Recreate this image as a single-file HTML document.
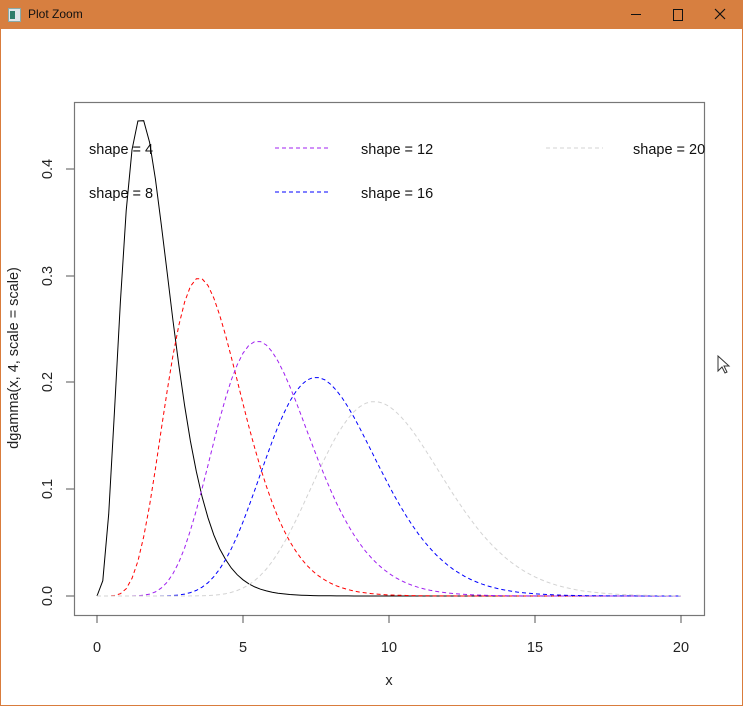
<!DOCTYPE html>
<html><head><meta charset="utf-8"><style>
html,body{margin:0;padding:0;width:743px;height:707px;overflow:hidden;background:#fff;font-family:"Liberation Sans",sans-serif}
.win{position:absolute;left:0;top:0;width:741px;height:705px;border:1px solid #d97c3c;border-top:none}
.tb{position:absolute;left:0;top:0;width:743px;height:29px;background:#d77f40}
.tb span{position:absolute;left:28px;top:7px;font-size:12px;color:#111}
svg text{font-family:"Liberation Sans",sans-serif}
</style></head><body>
<div class="win"></div>
<div class="tb">
<div style="position:absolute;left:8px;top:8px;width:11px;height:12px;background:#dfe6ea;border:1px solid #8aa"><div style="position:absolute;left:1px;top:2px;width:5px;height:8px;background:#2e7d6a"></div></div>
<span>Plot Zoom</span>
<div style="position:absolute;left:631px;top:14px;width:10px;height:1px;background:#111"></div>
<div style="position:absolute;left:673px;top:9px;width:8px;height:10px;border:1px solid #111"></div>
<svg style="position:absolute;left:714px;top:8px" width="12" height="12"><path d="M1 1L11 11M11 1L1 11" stroke="#111" stroke-width="1.2"/></svg>
</div>
<svg id="p" style="position:absolute;left:0;top:0" width="743" height="707">
<rect x="74.5" y="102.5" width="630" height="513" fill="none" stroke="#777" stroke-width="1.2"/>
<g stroke="#555" stroke-width="1">
<path d="M97 615v8M243 615v8M389 615v8M535 615v8M681 615v8"/>
<path d="M74 596h-8M74 489h-8M74 382h-8M74 276h-8M74 169h-8"/>
</g>
<g font-size="14.5" fill="#222" text-anchor="middle">
<text x="97" y="652">0</text><text x="243" y="652">5</text><text x="389" y="652">10</text><text x="535" y="652">15</text><text x="681" y="652">20</text>
<text x="389" y="685">x</text>
<text transform="translate(52,596) rotate(-90)">0.0</text>
<text transform="translate(52,489) rotate(-90)">0.1</text>
<text transform="translate(52,382) rotate(-90)">0.2</text>
<text transform="translate(52,276) rotate(-90)">0.3</text>
<text transform="translate(52,169) rotate(-90)">0.4</text>
<text transform="translate(18,358) rotate(-90)">dgamma(x, 4, scale = scale)</text>
</g>
<g font-size="14.5" fill="#111">
<text x="89" y="154">shape = 4</text><text x="89" y="198">shape = 8</text>
<text x="361" y="154">shape = 12</text><text x="361" y="198">shape = 16</text>
<text x="633" y="154">shape = 20</text>
</g>
<g stroke-dasharray="4,3" stroke-width="1" fill="none">
<path d="M275 148h56" stroke="#a020f0"/>
<path d="M275 192h56" stroke="#0000ff"/>
<path d="M546 148h57" stroke="#d3d3d3"/>
</g>
<g id="curves" fill="none"></g>
<path d="M718 356v15l4-4 3 6 2-1-3-6h5z" fill="#fff" stroke="#333" stroke-width="1"/>
</svg>
<script>
function lg(n){var r=0;for(var i=2;i<n;i++)r+=Math.log(i);return r;}
var ks=[4,8,12,16,20],cols=["#000","#ff0000","#a020f0","#0000ff","#d3d3d3"];
var g=document.getElementById("curves"),s="";
for(var j=0;j<5;j++){var k=ks[j],th=0.5,d="";
for(var i=0;i<=100;i++){var x=i*0.2;var y=x==0?0:Math.exp((k-1)*Math.log(x)-x/th-lg(k)-k*Math.log(th));
var px=97+x*29.2,py=596-y*1067.5;d+=(i?"L":"M")+px.toFixed(1)+" "+py.toFixed(1);}
s+='<path d="'+d+'" stroke="'+cols[j]+'" stroke-width="1"'+(j?' stroke-dasharray="4,3"':'')+'/>';}
g.innerHTML=s;
</script>
</body></html>
